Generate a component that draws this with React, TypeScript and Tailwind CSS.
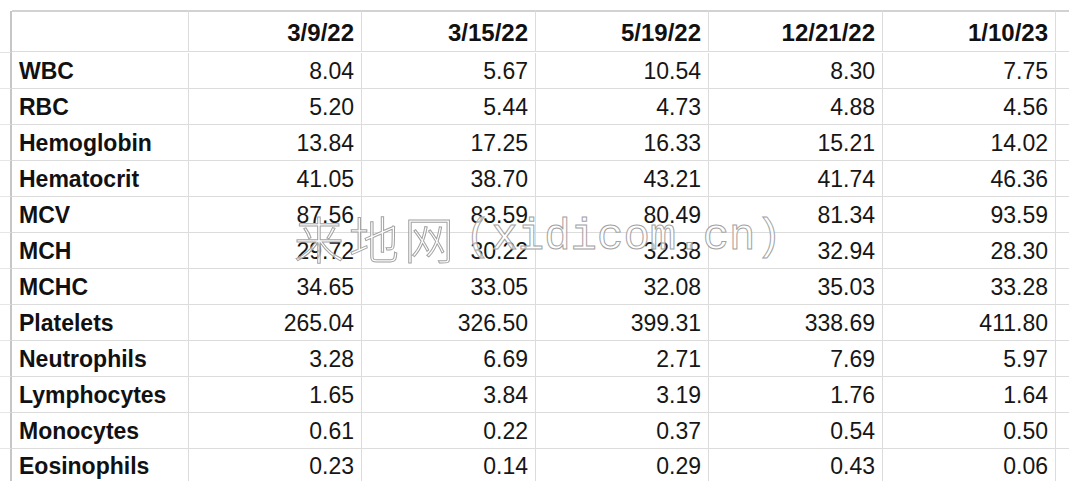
import React from "react";

const dates = ["3/9/22", "3/15/22", "5/19/22", "12/21/22", "1/10/23"];
const rows: [string, string[]][] = [
  ["WBC", ["8.04", "5.67", "10.54", "8.30", "7.75"]],
  ["RBC", ["5.20", "5.44", "4.73", "4.88", "4.56"]],
  ["Hemoglobin", ["13.84", "17.25", "16.33", "15.21", "14.02"]],
  ["Hematocrit", ["41.05", "38.70", "43.21", "41.74", "46.36"]],
  ["MCV", ["87.56", "83.59", "80.49", "81.34", "93.59"]],
  ["MCH", ["29.72", "30.22", "32.38", "32.94", "28.30"]],
  ["MCHC", ["34.65", "33.05", "32.08", "35.03", "33.28"]],
  ["Platelets", ["265.04", "326.50", "399.31", "338.69", "411.80"]],
  ["Neutrophils", ["3.28", "6.69", "2.71", "7.69", "5.97"]],
  ["Lymphocytes", ["1.65", "3.84", "3.19", "1.76", "1.64"]],
  ["Monocytes", ["0.61", "0.22", "0.37", "0.54", "0.50"]],
  ["Eosinophils", ["0.23", "0.14", "0.29", "0.43", "0.06"]],
];

export default function App() {
  return (
    <div className="relative w-[1080px] h-[491px] bg-white overflow-hidden font-['Liberation_Sans',Arial,sans-serif] text-[23px] text-[#161616]">
      <div className="pt-[10px] grid grid-cols-[12px_177px_173px_174px_173px_174px_173px_13px]">
        {/* header */}
        <div className="h-[42px] border-r-2 border-r-[#c6c6c6] border-b border-b-[#e2e2e2] mt-[1px]" />
        <div className="h-[42px] border-t-2 border-t-[#d2d2d2] border-b border-r border-[#dcdcdc]" />
        {dates.map((d) => (
          <div
            key={d}
            className="h-[42px] border-t-2 border-t-[#d2d2d2] border-b border-r border-[#dcdcdc] flex items-center justify-end pr-[7px] pt-[2px] font-bold text-[24px] text-[#111]"
          >
            {d}
          </div>
        ))}
        <div className="h-[42px] border-t-2 border-t-[#d2d2d2] border-b border-[#dcdcdc]" />
        {rows.map(([label, vals], ri) => {
          const last = ri === rows.length - 1;
          const h = last ? "h-[32px]" : "h-[36px]";
          const bb = last ? "" : "border-b";
          return (
            <React.Fragment key={label}>
              <div className={`${h} ${bb} border-r-2 border-r-[#c6c6c6] border-b-[#e6e6e6]`} />
              <div
                className={`${h} ${bb} border-r border-[#dcdcdc] flex items-center pl-[7px] pt-[2px] font-bold text-[#111]`}
              >
                {label}
              </div>
              {vals.map((v, i) => (
                <div
                  key={i}
                  className={`${h} ${bb} border-r border-[#dcdcdc] flex items-center justify-end pr-[7px] pt-[2px]`}
                >
                  {v}
                </div>
              ))}
              <div className={`${h} ${bb} border-[#dcdcdc]`} />
            </React.Fragment>
          );
        })}
      </div>

      {/* watermark */}
      <div className="absolute left-[294px] top-[212px] flex items-center whitespace-nowrap text-[rgba(255,255,255,0.75)] [-webkit-text-stroke:1px_#a2a2a2]">
        <span className="font-['Noto_Sans_CJK_SC',sans-serif] font-light text-[50px] leading-none tracking-[5px]">
          来地网
        </span>
        <span className="font-['Liberation_Mono',monospace] text-[44px] leading-none ml-[6px]">
          (xidicom.cn)
        </span>
      </div>
    </div>
  );
}
